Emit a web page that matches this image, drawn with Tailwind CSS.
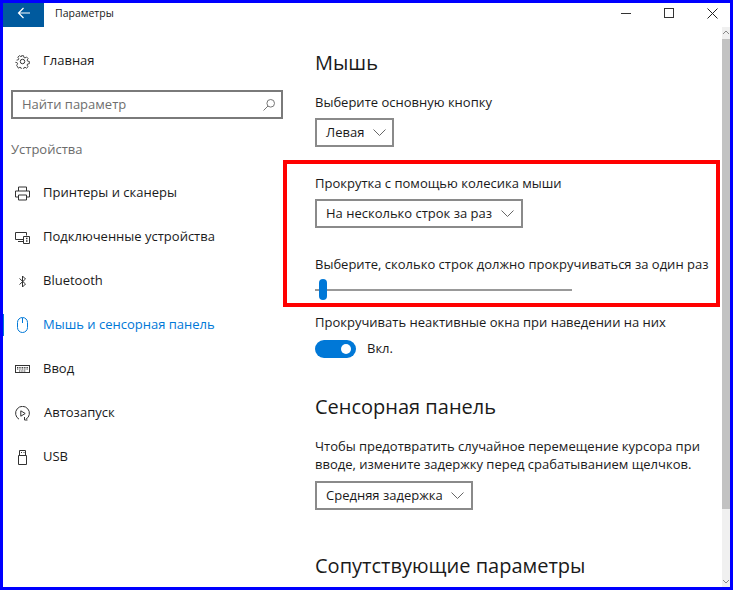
<!DOCTYPE html>
<html lang="ru">
<head>
    <meta charset="UTF-8">
    <title>Параметры</title>
    <script src="https://cdn.jsdelivr.net/npm/@tailwindcss/browser@4"></script>
</head>
<body class="bg-white">
<div class="relative w-[733px] h-[590px] overflow-hidden border-[3px] border-[#0000ff] bg-white font-['Open_Sans',sans-serif] text-[13px] text-[#1a1a1a]">
    <!-- title bar -->
    <div class="flex items-start h-6">
        <div class="w-[41px] h-6 bg-[#005a9e] flex items-center justify-center pb-[4px]">
            <svg width="14" height="12" viewBox="0 0 14 12" fill="none" stroke="white" stroke-width="1.2"><path d="M13 6H1.5M6.5 1l-5 5 5 5"/></svg>
        </div>
        <span class="ml-[11px] h-5 leading-5 text-[10.5px]">Параметры</span>
        <div class="ml-auto h-5 flex items-center gap-[33px] mr-[12px]">
            <div class="w-[10px] h-px bg-[#333]"></div>
            <div class="w-[10px] h-[10px] border border-[#333]"></div>
            <svg width="11" height="11" viewBox="0 0 11 11" stroke="#222" stroke-width="1"><path d="M.5.5l10 10M10.5.5l-10 10"/></svg>
        </div>
    </div>

    <div class="flex h-[560px]">
        <!-- sidebar -->
        <div class="w-[312px] shrink-0 pl-[8px]">
            <div class="flex items-center h-6 mt-[22px] pl-[4px] gap-[13px]">
                <svg width="15" height="15" viewBox="0 0 24 24" fill="none" stroke="#333" stroke-width="1.6"><circle cx="12" cy="12" r="3.6"/><path d="M10 1.5h4l.6 3.2 2 .9 2.8-1.8 2.8 2.8-1.8 2.8.9 2 3.2.6v4l-3.2.6-.9 2 1.8 2.8-2.8 2.8-2.8-1.8-2 .9-.6 3.2h-4l-.6-3.2-2-.9-2.8 1.8L1.4 19l1.8-2.8-.9-2-3.2-.6" transform="translate(1.4 1.4) scale(.88)"/><path d="M1.3 9.6l3.1-.6.9-2-1.8-2.8 2.8-2.8 2.8 1.8 2-.9" transform="translate(1.4 1.4) scale(.88)"/></svg>
                <span>Главная</span>
            </div>
            <div class="mt-[17px] w-[272px] h-[29px] border-2 border-[#7a7a7a] flex items-center pl-[9px] pr-[5px] text-[#6e6e6e]">
                <span>Найти параметр</span>
                <svg class="ml-auto" width="14" height="14" viewBox="0 0 14 14" fill="none" stroke="#777" stroke-width="1"><circle cx="8.7" cy="5.3" r="3.8"/><path d="M6 8L1.5 12.5"/></svg>
            </div>
            <div class="mt-[20px] h-5 leading-5 text-[#6b6b6b]">Устройства</div>

            <div class="mt-[12px]">
                <div class="flex items-center h-11 pl-[4px] gap-[13px]">
                    <svg width="15" height="15" viewBox="0 0 15 15" fill="none" stroke="#333"><path d="M3.5 5V1h8v4M3.5 11H.5V5h14v6h-3M3.5 9h8v5h-8z"/></svg>
                    <span>Принтеры и сканеры</span>
                </div>
                <div class="flex items-center h-11 pl-[4px] gap-[13px]">
                    <svg width="15" height="15" viewBox="0 0 15 15" fill="none" stroke="#333"><path d="M8 9.5H.5v-7h11v3M3 11.5h5M8.5 6.5h6v7h-6z"/><path d="M11 8.5h1.5M11 11h1.5" stroke-width="1.5"/></svg>
                    <span>Подключенные устройства</span>
                </div>
                <div class="flex items-center h-11 pl-[4px] gap-[13px]">
                    <svg width="15" height="15" viewBox="0 0 15 15" fill="none" stroke="#333"><path d="M4.5 4.5l6 5.5-3 3V2l3 3-6 5.5"/></svg>
                    <span>Bluetooth</span>
                </div>
                <div class="relative flex items-center h-11 pl-[4px] gap-[13px] text-[#0078d7]">
                    <div class="absolute left-[-8px] top-[11px] w-px h-[22px] bg-[#0078d7]"></div>
                    <svg width="15" height="16" viewBox="0 0 15 16" fill="none" stroke="#0078d7"><rect x="2.5" y=".5" width="10" height="15" rx="5"/><path d="M7.5 1v5"/></svg>
                    <span>Мышь и сенсорная панель</span>
                </div>
                <div class="flex items-center h-11 pl-[4px] gap-[13px]">
                    <svg width="15" height="15" viewBox="0 0 15 15" fill="none" stroke="#333"><rect x=".5" y="3.5" width="14" height="7"/><path d="M2 5.5h11M2 7h11M4 9h7" stroke-dasharray="1 .7"/></svg>
                    <span>Ввод</span>
                </div>
                <div class="flex items-center h-11 pl-[4px] gap-[14px]">
                    <svg width="15" height="15" viewBox="0 0 15 15" fill="none" stroke="#333"><path d="M4 13.2A6.9 6.9 0 1 1 11 13.2M5.8 4.8v5.4l4.4-2.7zM9.5 11v3h3"/></svg>
                    <span>Автозапуск</span>
                </div>
                <div class="flex items-center h-11 pl-[4px] gap-[13px]">
                    <svg width="15" height="15" viewBox="0 0 15 15" fill="none" stroke="#333"><path d="M4.5.5h6v5h-6zM3.5 5.5h8v9h-8z"/><path d="M6 2.5h1M8.5 2.5h1"/></svg>
                    <span>USB</span>
                </div>
            </div>
        </div>

        <!-- content -->
        <div class="flex-1 min-w-0">
            <h1 class="mt-[22px] h-7 leading-7 text-[20px] font-normal">Мышь</h1>
            <div class="mt-[15px] h-5 leading-5">Выберите основную кнопку</div>
            <div class="mt-[6px] w-[79px] h-[29px] border-2 border-[#8a8a8a] flex items-center pl-[9px]">
                Левая
                <svg class="ml-auto mr-[6px]" width="13" height="7" viewBox="0 0 13 7" fill="none" stroke="#666"><path d="M.5.5l6 6 6-6"/></svg>
            </div>
            <div class="mt-[26px] h-5 leading-5">Прокрутка с помощью колесика мыши</div>
            <div class="mt-[6px] w-[208px] h-[29px] border-2 border-[#8a8a8a] flex items-center pl-[9px]">
                На несколько строк за раз
                <svg class="ml-auto mr-[7px]" width="13" height="7" viewBox="0 0 13 7" fill="none" stroke="#666"><path d="M.5.5l6 6 6-6"/></svg>
            </div>
            <div class="mt-[26px] h-5 leading-5 whitespace-nowrap">Выберите, сколько строк должно прокручиваться за один раз</div>
            <div class="relative mt-[5px] w-[257px] h-[21px] flex items-center">
                <div class="w-full h-0.5 bg-[#999]"></div>
                <div class="absolute left-[4px] top-0 w-2 h-[21px] rounded-full bg-[#0078d7]"></div>
            </div>
            <div class="mt-[12px] h-5 leading-5 whitespace-nowrap">Прокручивать неактивные окна при наведении на них</div>
            <div class="mt-[8px] flex items-center h-[18px]">
                <div class="w-[41px] h-[18px] rounded-full bg-[#0078d7] flex items-center justify-end pr-[5px]">
                    <div class="w-2.5 h-2.5 rounded-full bg-white"></div>
                </div>
                <span class="ml-[11px]">Вкл.</span>
            </div>
            <h2 class="mt-[35px] h-7 leading-7 text-[20px] font-normal">Сенсорная панель</h2>
            <div class="mt-[16px] leading-[18px]">Чтобы предотвратить случайное перемещение курсора при<br>вводе, измените задержку перед срабатыванием щелчков.</div>
            <div class="mt-[8px] w-[158px] h-[29px] border-2 border-[#8a8a8a] flex items-center pl-[9px]">
                Средняя задержка
                <svg class="ml-auto mr-[7px]" width="13" height="7" viewBox="0 0 13 7" fill="none" stroke="#666"><path d="M.5.5l6 6 6-6"/></svg>
            </div>
            <h2 class="mt-[42px] h-7 leading-7 text-[20px] font-normal whitespace-nowrap">Сопутствующие параметры</h2>
        </div>

        <!-- scrollbar -->
        <div class="w-2 shrink-0 bg-[#f0f0f0] flex flex-col">
            <div class="h-3 text-center">
                <svg width="8" height="12" viewBox="0 0 8 12" fill="none" stroke="#888"><path d="M1 7l3-3 3 3"/></svg>
            </div>
            <div class="h-[470px] bg-[#c2c2c2]"></div>
            <div class="mt-auto h-3">
                <svg width="8" height="12" viewBox="0 0 8 12" fill="none" stroke="#888"><path d="M1 5l3 3 3-3"/></svg>
            </div>
        </div>
    </div>

    <!-- red annotation frame -->
    <div class="absolute left-[280px] top-[157px] w-[437px] h-[147px] border-4 border-[#ff0000]"></div>
</div>
</body>
</html>
